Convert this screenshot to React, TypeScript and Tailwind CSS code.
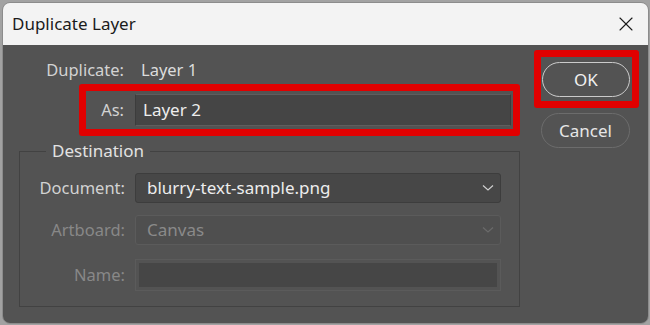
import { X } from 'lucide-react'

const font = { fontFamily: '"Noto Sans", "Open Sans", sans-serif' }

function Chevron({ dim }: { dim?: boolean }) {
  return (
    <svg width="12" height="8" viewBox="0 0 12 8" className="shrink-0">
      <path d="M1 1.5 L6 6 L11 1.5" fill="none" stroke={dim ? '#6a6a6a' : '#cfcfcf'} strokeWidth="1.2" />
    </svg>
  )
}

export default function App() {
  return (
    <div className="w-[650px] h-[325px] bg-[#a2a2a2] pt-[2px] pl-[2px] overflow-hidden" style={font}>
      <div className="w-[647px] h-[322px] rounded-[8px] overflow-hidden border border-[#8c8c8c] flex flex-col">
        {/* title bar */}
        <div className="h-[42px] shrink-0 bg-[#f3f3f3] flex items-center justify-between pl-[9px] pr-[10px]">
          <span className="text-[17px] text-[#1b1b1b]">Duplicate Layer</span>
          <X className="w-[24px] h-[24px] text-[#1b1b1b]" strokeWidth={1.1} />
        </div>

        {/* body */}
        <div className="flex-1 bg-[#535353] flex pl-[16px] text-[16.5px]">
          <div className="w-[501px] flex flex-col">
            <div className="mt-[13px] h-[24px] flex items-center">
              <span className="w-[105px] text-right text-[#d2d2d2]">Duplicate:</span>
              <span className="ml-[17px] text-[#dcdcdc]">Layer 1</span>
            </div>

            <div className="ml-[60px] mt-[2px] h-[52px] border-[7px] border-[#e10000] rounded-[3px] flex items-center pr-[2px]">
              <span className="w-[38px] text-right text-[#d2d2d2]">As:</span>
              <div className="ml-[11px] flex-1 h-[32px] bg-[#454545] border-y border-[#5e5e5e] border-x border-x-[#3c3c3c] flex items-center pl-[7px] text-[#ededed] text-[17px]">
                Layer 2
              </div>
            </div>

            <fieldset className="mt-[6px] h-[165px] shrink-0 border border-[#424242] px-0 pb-0">
              <legend className="ml-[26px] px-[6px] text-[17px] text-[#e2e2e2] leading-[18px]">Destination</legend>
              <div className="mt-[13px] flex items-center">
                <span className="w-[105px] text-right text-[#d2d2d2]">Document:</span>
                <div className="ml-[10px] w-[366px] h-[30px] rounded-[3px] bg-[#474747] border border-[#3d3d3d] flex items-center justify-between pl-[11px] pr-[6px] text-[17px] text-[#ededed]">
                  <span>blurry-text-sample.png</span>
                  <Chevron />
                </div>
              </div>
              <div className="mt-[12px] flex items-center">
                <span className="w-[105px] text-right text-[#888888]">Artboard:</span>
                <div className="ml-[10px] w-[366px] h-[30px] rounded-[3px] bg-[#4f4f4f] border border-[#5b5b5b] flex items-center justify-between pl-[11px] pr-[6px] text-[17px] text-[#8a8a8a]">
                  <span>Canvas</span>
                  <Chevron dim />
                </div>
              </div>
              <div className="mt-[14px] flex items-center">
                <span className="w-[105px] text-right text-[#888888]">Name:</span>
                <div className="ml-[10px] w-[366px] h-[32px] border border-[#5b5b5b] p-[3px] flex">
                  <div className="flex-1 bg-[#464646]" />
                </div>
              </div>
            </fieldset>
          </div>

          <div className="ml-[14px] flex flex-col items-start">
            <div className="mt-[5px] w-[105px] h-[58px] border-[7px] border-[#e10000] rounded-[3px] pl-[1px] pt-[5px]">
              <div className="w-[88px] h-[35px] rounded-full border border-[#cbcbcb] flex items-center justify-center text-[17px] text-[#f0f0f0]">
                OK
              </div>
            </div>
            <div className="mt-[5px] ml-[7px] w-[89px] h-[35px] rounded-full border border-[#6c6c6c] flex items-center justify-center text-[17px] text-[#e6e6e6]">
              Cancel
            </div>
          </div>
        </div>
      </div>
    </div>
  )
}
